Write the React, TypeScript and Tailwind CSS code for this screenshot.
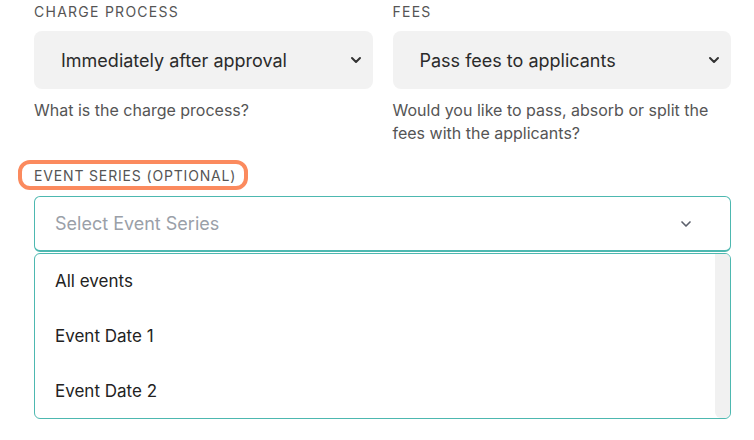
import { ChevronDown } from 'lucide-react';

const EVENT_OPTIONS = ['All events', 'Event Date 1', 'Event Date 2'];

function GraySelect({ value }: { value: string }) {
    return (
        <div className="flex h-[58px] items-center justify-between rounded-lg bg-[#f2f2f2] pl-[27px] pr-[9px]">
            <span className="text-[18px] text-[#2b2b2b]">{value}</span>
            <ChevronDown className="h-4 w-4 text-[#333]" strokeWidth={3} />
        </div>
    );
}

export default function App() {
    return (
        <div className="h-[440px] w-[754px] overflow-hidden bg-white pl-[34px] pr-[23px] font-['Inter',sans-serif]">
            <div className="grid grid-cols-2 gap-5">
                <div>
                    <div className="pt-[3px] text-[14px] uppercase leading-[18px] tracking-[0.09em] text-[#555]">Charge Process</div>
                    <div className="mt-[10px]">
                        <GraySelect value="Immediately after approval" />
                    </div>
                    <p className="mt-[10px] text-[16px] leading-[23px] text-[#555]">What is the charge process?</p>
                </div>
                <div>
                    <div className="pt-[3px] text-[14px] uppercase leading-[18px] tracking-[0.09em] text-[#555]">Fees</div>
                    <div className="mt-[10px]">
                        <GraySelect value="Pass fees to applicants" />
                    </div>
                    <p className="mt-[10px] text-[16px] leading-[23px] text-[#555]">
                        Would you like to pass, absorb or split the fees with the applicants?
                    </p>
                </div>
            </div>

            <div className="mt-[15px] -ml-4 inline-flex h-[30px] items-center rounded-xl border-4 border-[#fb8a5e] pl-3 pr-2">
                <span className="text-[14px] uppercase tracking-[0.06em] text-[#555]">Event Series (Optional)</span>
            </div>

            <div className="mt-[6px] flex h-[56px] items-center justify-between rounded-md border border-b-2 border-[#4db8b0] pl-5 pr-9">
                <span className="text-[18px] text-[#9aa0a8]">Select Event Series</span>
                <ChevronDown className="h-4 w-4 text-[#5b5f6b]" strokeWidth={2.5} />
            </div>

            <div className="mt-[1px] flex h-[166px] overflow-hidden rounded-md border border-[#4db8b0]">
                <div className="flex flex-1 flex-col">
                    {EVENT_OPTIONS.map(option => (
                        <div key={option} className="flex h-[55px] shrink-0 items-center pl-5 text-[17px] text-[#222]">
                            {option}
                        </div>
                    ))}
                </div>
                <div className="w-[15px] rounded-b-md bg-[#f1f1f1]" />
            </div>
        </div>
    );
}
